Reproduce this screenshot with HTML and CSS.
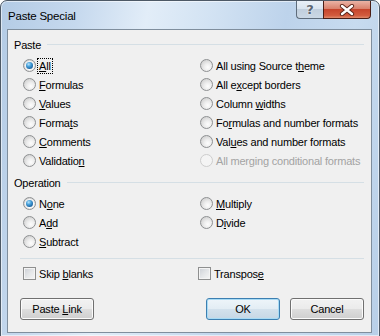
FILE: index.html
```html
<!DOCTYPE html>
<html lang="en">
<head>
    <meta charset="UTF-8">
    <title>Paste Special</title>
    <link rel="stylesheet" href="styles.css">
</head>
<body>
    <div class="window">
        <div class="titlebar">
            <span class="title">Paste Special</span>
            <div class="caption">
                <span class="cap-btn help">?</span>
                <span class="cap-btn close">
                    <svg width="16" height="12" viewBox="0 0 16 12">
                        <path d="M3 2 L13 10 M13 2 L3 10" stroke="#5a2418" stroke-width="4.2" stroke-linecap="round"/>
                        <path d="M3 2 L13 10 M13 2 L3 10" stroke="#fff" stroke-width="2.4" stroke-linecap="round"/>
                    </svg>
                </span>
            </div>
        </div>

        <div class="client">
            <div class="group-head"><span>Paste</span><i class="rule"></i></div>
            <div class="options">
                <label class="opt"><span class="radio checked"></span><span class="focus"><u>A</u>ll</span></label>
                <label class="opt"><span class="radio"></span><span>All using Source t<u>h</u>eme</span></label>
                <label class="opt"><span class="radio"></span><span><u>F</u>ormulas</span></label>
                <label class="opt"><span class="radio"></span><span>All e<u>x</u>cept borders</span></label>
                <label class="opt"><span class="radio"></span><span><u>V</u>alues</span></label>
                <label class="opt"><span class="radio"></span><span>Column <u>w</u>idths</span></label>
                <label class="opt"><span class="radio"></span><span>Forma<u>t</u>s</span></label>
                <label class="opt"><span class="radio"></span><span>Fo<u>r</u>mulas and number formats</span></label>
                <label class="opt"><span class="radio"></span><span><u>C</u>omments</span></label>
                <label class="opt"><span class="radio"></span><span>Val<u>u</u>es and number formats</span></label>
                <label class="opt"><span class="radio"></span><span>Validatio<u>n</u></span></label>
                <label class="opt disabled"><span class="radio"></span><span>All merging conditional formats</span></label>
            </div>

            <div class="group-head operation"><span>Operation</span><i class="rule"></i></div>
            <div class="options">
                <label class="opt"><span class="radio checked"></span><span>N<u>o</u>ne</span></label>
                <label class="opt"><span class="radio"></span><span><u>M</u>ultiply</span></label>
                <label class="opt"><span class="radio"></span><span>A<u>d</u>d</span></label>
                <label class="opt"><span class="radio"></span><span>D<u>i</u>vide</span></label>
                <label class="opt"><span class="radio"></span><span><u>S</u>ubtract</span></label>
            </div>

            <div class="separator"></div>

            <div class="checks">
                <label class="opt"><span class="check"></span><span>Skip <u>b</u>lanks</span></label>
                <label class="opt"><span class="check"></span><span>Transpos<u>e</u></span></label>
            </div>

            <div class="buttons">
                <button class="btn">Paste <u>L</u>ink</button>
                <span class="spacer"></span>
                <button class="btn default">OK</button>
                <button class="btn">Cancel</button>
            </div>
        </div>
    </div>
</body>
</html>
```

FILE: styles.css
```css
body {
    margin: 0;
    background: #fff;
    font-family: 'Liberation Sans', Arial, sans-serif;
    font-size: 11px;
    letter-spacing: -0.2px;
    color: #000;
}

.window {
    width: 380px;
    height: 337px;
    box-sizing: border-box;
    border: 1px solid #4d5966;
    border-radius: 7px 7px 0 0;
    padding: 0 7px 0 6px;
    background: linear-gradient(100deg, #b3cbe5 0%, #c6d9ee 18%, #e2edf8 34%, #d3e3f3 48%, #bdd3eb 66%, #c7dbef 82%, #b8cfe8 100%);
    box-shadow: inset 0 0 0 1px rgba(255, 255, 255, 0.55);
}

.titlebar {
    height: 28px;
    display: flex;
    align-items: flex-start;
}

.title {
    margin: 7px 0 0 1px;
    font-size: 11.5px;
    line-height: 16px;
    color: #000;
}

.caption {
    margin-left: auto;
    margin-right: 1px;
    display: flex;
}

.cap-btn {
    height: 18px;
    display: flex;
    align-items: center;
    justify-content: center;
    box-sizing: border-box;
    border: 1px solid #5e6c7b;
    border-top: none;
}

.help {
    width: 27px;
    border-right: none;
    border-radius: 0 0 0 4px;
    background: linear-gradient(#e9f0f7 0%, #d9e4ef 45%, #c1cfdd 50%, #cbd8e5 100%);
    color: #5b6673;
    font-family: 'DejaVu Sans', sans-serif;
    font-weight: bold;
    font-size: 13px;
    letter-spacing: 0;
    text-shadow: 0 0 2px #fff;
}

.close {
    width: 48px;
    border-color: #4a1e16;
    border-radius: 0 0 4px 0;
    background: linear-gradient(#eab3a5 0%, #d9826d 45%, #c6452c 50%, #d25b3e 85%, #e08a6c 100%);
}

.client {
    height: 304px;
    box-sizing: border-box;
    border: 1px solid #7f8e9d;
    background: #f0f0f0;
    padding: 7px 7px 0 6px;
}

.group-head {
    height: 16px;
    display: flex;
    align-items: center;
}

.group-head .rule {
    flex: 1;
    height: 0;
    border-top: 1px solid #d5dfe5;
    margin: 0 0 2px 6px;
}

.group-head.operation {
    margin-top: 5px;
}

.options {
    margin-top: 3px;
    padding-left: 9px;
    display: grid;
    grid-template-columns: 177px 1fr;
    grid-auto-rows: 19px;
}

.opt {
    display: flex;
    align-items: center;
    gap: 3px;
    white-space: nowrap;
}

.opt u {
    text-underline-offset: 1px;
}

.radio {
    width: 13px;
    height: 13px;
    box-sizing: border-box;
    border-radius: 50%;
    border: 1px solid #8e9092;
    background: radial-gradient(circle at 62% 66%, #fdfdfd 0%, #eeeeee 35%, #d4d4d4 75%, #bdbdbd 100%);
    display: flex;
    align-items: center;
    justify-content: center;
}

.radio.checked::after {
    content: "";
    width: 7px;
    height: 7px;
    border-radius: 50%;
    background: radial-gradient(circle at 38% 32%, #b9e4fb 0%, #4aa3dc 35%, #1f6aa8 70%, #174a78 100%);
    box-shadow: 0 0 0 1px rgba(255, 255, 255, 0.7);
}

.opt.disabled {
    color: #a3a3a3;
}

.opt.disabled .radio {
    border-color: #cdcdcd;
    background: #f4f4f4;
}

.focus {
    outline: 1px dotted #000;
    outline-offset: 0;
    padding: 0 1px;
    margin-left: -1px;
    line-height: 14px;
}

.separator {
    margin: 7px 0 0 6px;
    height: 0;
    border-top: 1px solid #d5dfe5;
}

.checks {
    margin-top: 5px;
    padding-left: 9px;
    display: grid;
    grid-template-columns: 175px 1fr;
    grid-auto-rows: 19px;
}

.check {
    width: 13px;
    height: 13px;
    box-sizing: border-box;
    border: 1px solid #8e8f8f;
    background: linear-gradient(135deg, #cbcfd5 0%, #e4e6e8 50%, #f6f6f6 100%);
    box-shadow: inset 0 0 0 1px #f4f4f4;
}

.buttons {
    margin-top: 15px;
    padding-left: 6px;
    display: flex;
    gap: 10px;
}

.buttons .spacer {
    flex: 1;
}

.btn {
    width: 74px;
    height: 22px;
    padding: 0 0 1px;
    font: inherit;
    letter-spacing: inherit;
    color: #000;
    border: 1px solid #707070;
    border-radius: 3px;
    background: linear-gradient(#f2f2f2 0%, #ebebeb 48%, #dddddd 52%, #cfcfcf 100%);
    box-shadow: inset 0 0 0 1px #fbfbfb;
}

.btn.default {
    border-color: #3c7fb1;
    background: linear-gradient(#eef5fa 0%, #e3edf4 48%, #d3e1ec 52%, #c6d7e5 100%);
    box-shadow: inset 0 0 0 1px #a8dbf5;
}
```
